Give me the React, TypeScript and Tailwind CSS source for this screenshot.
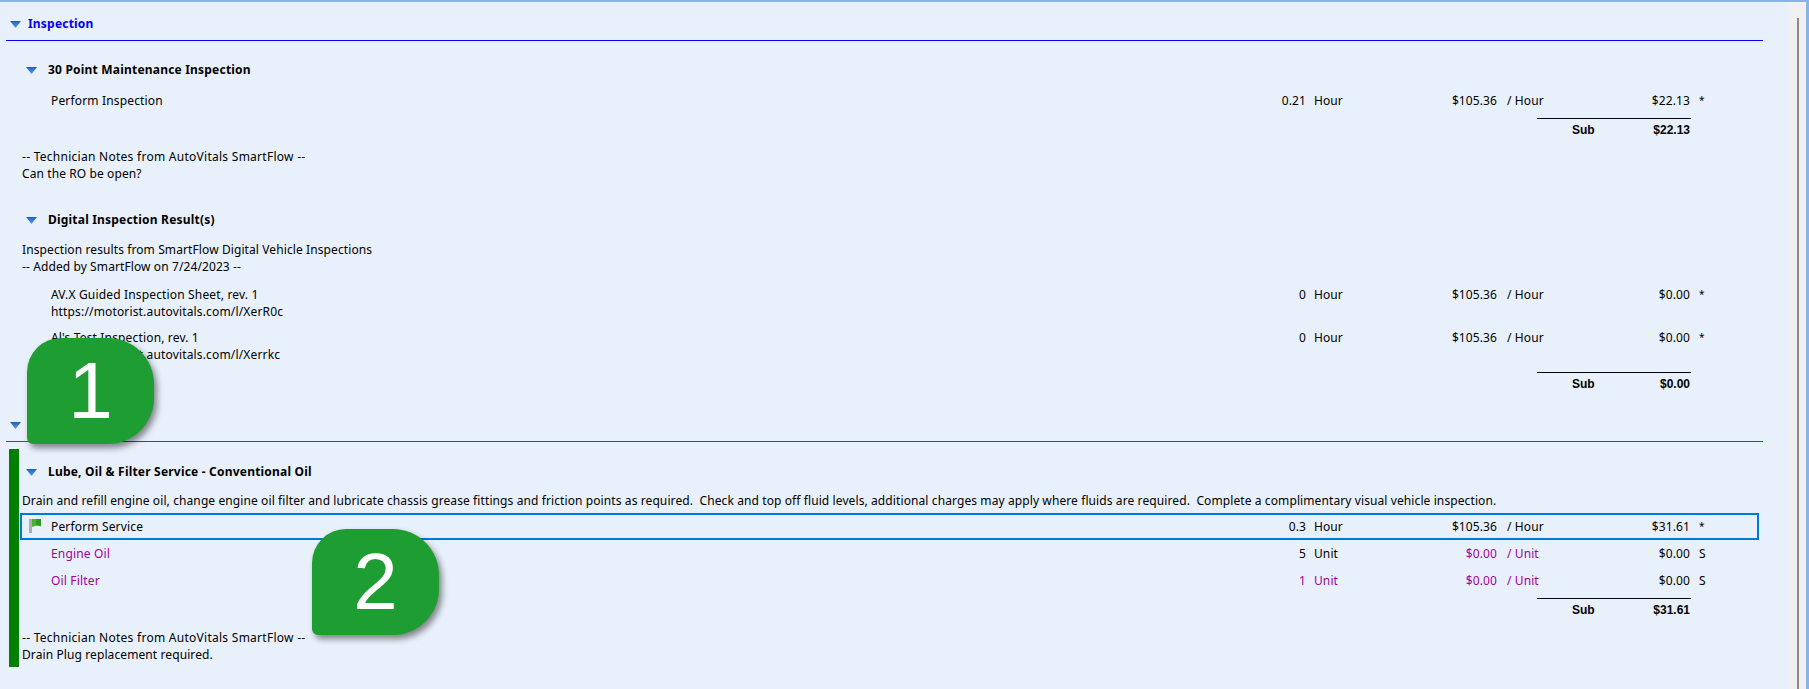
const FONT = "font-['Noto_Sans','Open_Sans',sans-serif]";

type RowProps = {
  name: string;
  url?: string;
  qty: string;
  unit: string;
  rate: string;
  per: string;
  total: string;
  flag: string;
  rateColor?: string;
  nameColor?: string;
  qtyColor?: string;
  selected?: boolean;
  className?: string;
};

const Caret = ({ className }: { className?: string }) => (
  <svg width="11" height="7" viewBox="0 0 11 7" className={className}>
    <defs>
      <linearGradient id="caretFill" x1="0" y1="0" x2="0" y2="1">
        <stop offset="0" stopColor="#1d5fc0" />
        <stop offset="1" stopColor="#5a9bec" />
      </linearGradient>
    </defs>
    <path d="M0 0H11L5.5 7Z" fill="url(#caretFill)" />
  </svg>
);

const Flag = () => (
  <svg width="14" height="15" viewBox="0 0 14 15" className="absolute left-[8px] top-[5px]">
    <rect x="1" y="1" width="3" height="14" fill="#a9adb0" />
    <path d="M4 1H13V8.5L9 7.5L4 9Z" fill="#4fae2c" />
    <path d="M8 1H13V8L8 7Z" fill="#2f9a1c" />
  </svg>
);

const Row = ({ name, url, qty, unit, rate, per, total, flag, rateColor = "text-black", nameColor = "text-black", qtyColor = "text-black", selected, className = "" }: RowProps) => {
  const cell = url ? "self-start pt-0" : "self-start pt-[5px]";
  return (
    <div className={`relative flex text-[12px] leading-[17px] tracking-[0.1px] ${url ? "h-[35px] items-start" : "h-[27px] items-center"} ${selected ? "outline-2 -outline-offset-2 outline-[#0078d7]" : ""} ${className}`}>
      {selected && <Flag />}
      <div className={`flex-1 tracking-[0.16px] ${nameColor}`}>
        <div className="pl-[var(--name-pad)]">{name}</div>
        {url && <div className="pl-[var(--name-pad)]">{url}</div>}
      </div>
      <div className={`w-[60px] text-right ${cell} ${qtyColor}`}>{qty}</div>
      <div className={`ml-[8px] w-[100px] ${cell} ${qtyColor}`}>{unit}</div>
      <div className={`w-[83px] text-right ${cell} ${rateColor}`}>{rate}</div>
      <div className={`ml-[10px] w-[100px] ${cell} ${rateColor}`}>{per}</div>
      <div className={`w-[83px] text-right text-black ${cell}`}>{total}</div>
      <div className={`ml-[9px] w-[60px] text-black ${cell} ${flag === "*" ? "text-[10px]" : ""}`}>{flag}</div>
    </div>
  );
};

const SubTotal = ({ value, className = "" }: { value: string; className?: string }) => (
  <div className={`flex justify-end pr-[68px] ${className}`}>
    <div className="flex w-[154px] justify-between border-t border-black pt-[1px] pr-[1px] pl-[35px] font-['Liberation_Sans',sans-serif] text-[12px] font-bold leading-[20px]">
      <span>Sub</span>
      <span>{value}</span>
    </div>
  </div>
);

const JobTitle = ({ title, className = "" }: { title: string; className?: string }) => (
  <div className={`flex items-center ${className}`}>
    <Caret className="ml-[26px] mr-[11px]" />
    <div className="text-[12px] font-bold leading-[18px] tracking-[0.2px] text-black">{title}</div>
  </div>
);

const Badge = ({ n, className }: { n: string; className: string }) => (
  <div className={`absolute flex h-[106px] w-[127px] items-center justify-center rounded-[34px_46px_46px_6px] bg-[#1e9e32] font-['Liberation_Sans',sans-serif] text-[80px] leading-none text-white shadow-[3px_4px_6px_rgba(0,0,0,0.45)] ${className}`}>
    {n}
  </div>
);

export default function App() {
  return (
    <div className={`relative h-[689px] w-[1809px] overflow-hidden border-t-2 border-r-[3px] border-[#8ab4e8] bg-[#e8f0fb] ${FONT} text-[12px] text-black`}>
      <div className="flex h-full">
        <div className="w-[1759px]">
          {/* Inspection category */}
          <div className="flex h-[38px] items-center pt-[6px] pl-[10px]">
            <Caret className="mr-[7px]" />
            <span className="text-[12px] font-bold tracking-[0.2px] text-[#0000ff]">Inspection</span>
          </div>
          <div className="ml-[6px] mr-[-4px] h-px bg-[#0000ff]" />

          <JobTitle title="30 Point Maintenance Inspection" className="mt-[20px]" />
          <div className="[--name-pad:51px] mt-[8px]">
            <Row name="Perform Inspection" qty="0.21" unit="Hour" rate="$105.36" per="/ Hour" total="$22.13" flag="*" />
          </div>
          <SubTotal value="$22.13" className="mt-[4px]" />
          <div className="mt-[8px] pl-[22px] leading-[17px] tracking-[0.1px]">
            <div className="tracking-[0.27px]">-- Technician Notes from AutoVitals SmartFlow --</div>
            <div>Can the RO be open?</div>
          </div>

          <JobTitle title="Digital Inspection Result(s)" className="mt-[29px]" />
          <div className="mt-[12px] pl-[22px] leading-[17px] tracking-[0.1px]">
            <div>Inspection results from SmartFlow Digital Vehicle Inspections</div>
            <div>-- Added by SmartFlow on 7/24/2023 --</div>
          </div>
          <div className="[--name-pad:51px] mt-[11px] flex flex-col gap-[8px]">
            <Row name="AV.X Guided Inspection Sheet, rev. 1" url="https://motorist.autovitals.com/l/XerR0c" qty="0" unit="Hour" rate="$105.36" per="/ Hour" total="$0.00" flag="*" />
            <Row name="Al's Test Inspection, rev. 1" url="https://motorist.autovitals.com/l/Xerrkc" qty="0" unit="Hour" rate="$105.36" per="/ Hour" total="$0.00" flag="*" />
          </div>
          <SubTotal value="$0.00" className="mt-[8px]" />

          {/* Second category, name is hidden under the callout */}
          <div className="mt-[24px] flex h-[14px] items-center pl-[10px]">
            <Caret />
          </div>
          <div className="ml-[6px] mr-[-4px] mt-[9px] h-px bg-[#008000]" />

          <div className="ml-[9px] mt-[7px] border-l-[10px] border-[#008000] pb-[4px]">
            <div className="-ml-[19px]">
              <JobTitle title="Lube, Oil & Filter Service - Conventional Oil" className="pt-[14px]" />
            </div>
            <div className="mt-[11px] pl-[3px] leading-[18px] tracking-[0.1px]">
              Drain and refill engine oil, change engine oil filter and lubricate chassis grease fittings and friction points as required.&nbsp; Check and top off fluid levels, additional charges may apply where fluids are required.&nbsp; Complete a complimentary visual vehicle inspection.
            </div>
            <div className="mt-[3px] ml-px [--name-pad:31px]">
              <Row selected name="Perform Service" qty="0.3" unit="Hour" rate="$105.36" per="/ Hour" total="$31.61" flag="*" />
              <Row nameColor="text-[#a000a0]" rateColor="text-[#a000a0]" name="Engine Oil" qty="5" unit="Unit" rate="$0.00" per="/ Unit" total="$0.00" flag="S" />
              <Row nameColor="text-[#a000a0]" rateColor="text-[#a000a0]" qtyColor="text-[#a000a0]" name="Oil Filter" qty="1" unit="Unit" rate="$0.00" per="/ Unit" total="$0.00" flag="S" />
            </div>
            <SubTotal value="$31.61" className="mt-[4px]" />
            <div className="mt-[9px] pl-[3px] leading-[17px] tracking-[0.1px]">
              <div className="tracking-[0.27px]">-- Technician Notes from AutoVitals SmartFlow --</div>
              <div>Drain Plug replacement required.</div>
            </div>
          </div>
        </div>

        {/* Scrollbar */}
        <div className="ml-[30px] flex h-full w-[17px] justify-center bg-[#f0f0f0] pt-[16px]">
          <div className="h-full w-[2px] bg-[#8a8a8a]" />
        </div>
      </div>

      <Badge n="1" className="left-[27px] top-[336px]" />
      <Badge n="2" className="left-[312px] top-[527px]" />
    </div>
  );
}
